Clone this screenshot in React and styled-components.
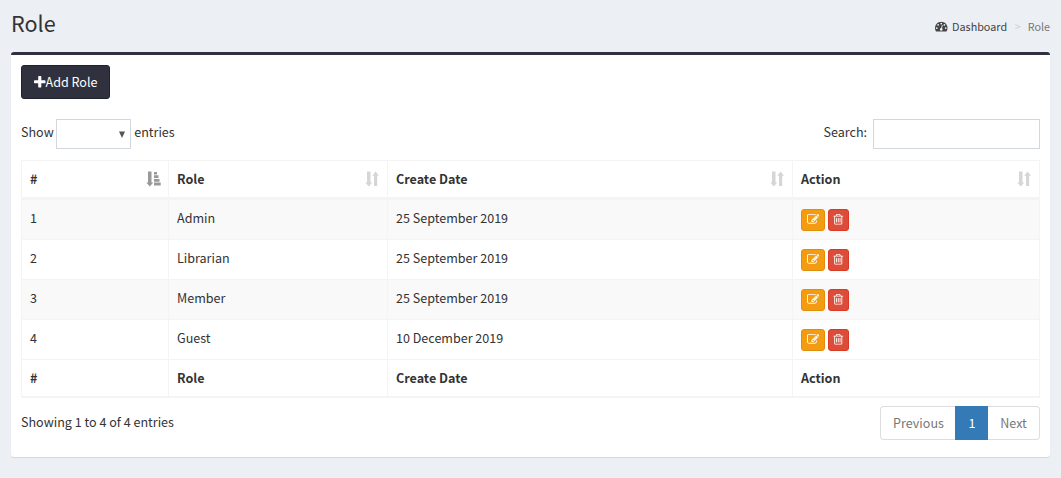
import React from "react";
import styled, { createGlobalStyle, css } from "styled-components";

const GlobalStyle = createGlobalStyle`
  * { box-sizing: border-box; }
  body {
    margin: 0;
    background: #ecf0f5;
    color: #333;
    font-family: "Source Sans Pro", "Noto Sans CJK SC", sans-serif;
    font-size: 12.56px;
    line-height: 20px;
  }
`;

const Page = styled.main`
  height: 478px;
  padding: 0 11px;
`;

const PageHeader = styled.header`
  display: flex;
  justify-content: space-between;
  height: 52px;
`;

const Title = styled.h1`
  margin: 0;
  padding-top: 10px;
  font-size: 21.6px;
  font-weight: 400;
  line-height: 26px;
`;

const Breadcrumb = styled.nav`
  display: flex;
  align-items: center;
  height: 18px;
  margin-top: 17px;
  font-size: 10.8px;
  line-height: 18px;
  color: #777;
`;

const Crumb = styled.a`
  display: flex;
  align-items: center;
  gap: 4.5px;
  color: #444;
`;

const Separator = styled.span`
  padding: 0 7px 0 7.6px;
  color: #ccc;
`;

const Card = styled.section`
  height: 405px;
  padding: 10px 10px 0;
  background: #fff;
  border-top: 3px solid #2f323e;
  border-radius: 3px;
  box-shadow: 0 1px 1px rgba(0, 0, 0, 0.1);
`;

const AddButton = styled.button`
  display: flex;
  align-items: center;
  width: 89px;
  height: 34px;
  padding: 0 0 0 12px;
  border: 1px solid #20222b;
  border-radius: 3px;
  background: #2f323e;
  color: #fff;
  font: inherit;
`;

const Controls = styled.div`
  display: flex;
  justify-content: space-between;
  height: 30px;
  margin: 20px 0 11px;
`;

const Control = styled.label`
  display: flex;
  line-height: 25px;
`;

const LengthSelect = styled.span`
  display: flex;
  align-items: center;
  justify-content: flex-end;
  width: 75px;
  height: 30px;
  margin: 0 3.5px 0 2px;
  padding-right: 5px;
  border: 1px solid #d2d6de;
  background: #fff;
`;

const SearchInput = styled.input`
  width: 167px;
  height: 30px;
  margin: 0 0 0 6px;
  border: 1px solid #d2d6de;
  background: #fff;
  outline: none;
`;

const Table = styled.table`
  width: 1019px;
  table-layout: fixed;
  border-spacing: 0;
  border-top: 1px solid #f4f4f4;
  border-left: 1px solid #f4f4f4;
`;

const Col = styled.col`
  width: ${(p) => p.$width}px;
`;

const cell = css`
  padding: 8px;
  text-align: left;
  vertical-align: top;
  border-right: 1px solid #f4f4f4;
`;

const HeadCell = styled.th`
  ${cell}
  padding-right: 7px;
  height: 39px;
  border-bottom: 3px solid #f4f4f4;
`;

const HeadContent = styled.div`
  display: flex;
  justify-content: space-between;
`;

const BodyRow = styled.tr`
  background: #fff;
  &:nth-child(odd) { background: #f9f9f9; }
`;

const Cell = styled.td`
  ${cell}
  height: 40px;
  border-bottom: 1px solid #f4f4f4;
`;

const FootCell = styled.th`
  ${cell}
  height: 38px;
  border-bottom: 2px solid #f4f4f4;
`;

const Actions = styled.div`
  display: flex;
  gap: 3px;
  padding-top: 1px;
`;

const tones = {
  edit: css`
    width: 24px;
    background: #f39c12;
    border-color: #e08e0b;
  `,
  remove: css`
    width: 21px;
    background: #dd4b39;
    border-color: #d73925;
  `,
};

const ActionButton = styled.button`
  display: flex;
  align-items: center;
  justify-content: center;
  height: 22px;
  padding: 0 0 1px;
  border: 1px solid;
  border-radius: 3px;
  color: #fff;
  ${(p) => tones[p.$tone]}
`;

const Footer = styled.div`
  display: flex;
  justify-content: space-between;
  padding-top: 8px;
`;

const Info = styled.div`
  padding-top: 6px;
`;

const Pagination = styled.div`
  display: flex;
  height: 34px;
`;

const PageButton = styled.button`
  width: ${(p) => p.$width}px;
  padding: 0 0 0 1px;
  font: inherit;
  color: #777;
  background: #fff;
  border: 1px solid #ddd;
  &:first-child { border-right: 0; border-radius: 4px 0 0 4px; }
  &:last-child { border-left: 0; padding-left: 0; border-radius: 0 4px 4px 0; }
  ${(p) => p.$active && css`
    color: #fff;
    background: #337ab7;
    border-color: #337ab7;
  `}
`;

const Svg = styled.svg`
  display: block;
  flex: none;
  fill: currentColor;
`;

const SortSvg = styled(Svg)`
  margin-top: 2px;
  color: ${(p) => (p.$active ? "#999" : "#d6d6d6")};
`;

const icons = {
  plus: {
    box: "192 128 1408 1408",
    d: "M1600 736v192q0 40-28 68t-68 28h-416v416q0 40-28 68t-68 28h-192q-40 0-68-28t-28-68v-416h-416q-40 0-68-28t-28-68v-192q0-40 28-68t68-28h416v-416q0-40 28-68t68-28h192q40 0 68 28t28 68v416h416q40 0 68 28t28 68z",
  },
  dashboard: {
    box: "0 0 1792 1792",
    d: "M384 1152q0-53-37.5-90.5t-90.5-37.5-90.5 37.5-37.5 90.5 37.5 90.5 90.5 37.5 90.5-37.5 37.5-90.5zm192-448q0-53-37.5-90.5t-90.5-37.5-90.5 37.5-37.5 90.5 37.5 90.5 90.5 37.5 90.5-37.5 37.5-90.5zm428 481l101-382q6-26-7.5-48.5t-38.5-29.5-48 6.5-30 39.5l-101 382q-60 5-107 43.5t-63 98.5q-20 77 20 146t117 89 146-20 89-117q16-60-6-117t-72-91zm660-33q0-53-37.5-90.5t-90.5-37.5-90.5 37.5-37.5 90.5 37.5 90.5 90.5 37.5 90.5-37.5 37.5-90.5zm-640-640q0-53-37.5-90.5t-90.5-37.5-90.5 37.5-37.5 90.5 37.5 90.5 90.5 37.5 90.5-37.5 37.5-90.5zm448 192q0-53-37.5-90.5t-90.5-37.5-90.5 37.5-37.5 90.5 37.5 90.5 90.5 37.5 90.5-37.5 37.5-90.5zm320 448q0 261-141 483-19 29-54 29h-1402q-35 0-54-29-141-221-141-483 0-182 71-348t191-286 286-191 348-71 348 71 286 191 191 286 71 348z",
  },
  edit: {
    box: "0 0 1792 1792",
    d: "M888 1184l116-116-152-152-116 116v56h96v96h56zm440-720q-16-16-33 1l-350 350q-17 17-1 33t33-1l350-350q17-17 1-33zm80 594v190q0 119-84.5 203.5t-203.5 84.5h-832q-119 0-203.5-84.5t-84.5-203.5v-832q0-119 84.5-203.5t203.5-84.5h832q63 0 117 25 15 7 18 23 3 17-9 29l-49 49q-14 14-32 8-23-6-45-6h-832q-66 0-113 47t-47 113v832q0 66 47 113t113 47h832q66 0 113-47t47-113v-126q0-13 9-22l64-64q15-15 35-7t20 29zm-96-738l288 288-672 672h-288v-288zm444 132l-92 92-288-288 92-92q28-28 68-28t68 28l152 152q28 28 28 68t-28 68z",
  },
  trash: {
    box: "0 0 1792 1792",
    d: "M704 736v576q0 14-9 23t-23 9h-64q-14 0-23-9t-9-23v-576q0-14 9-23t23-9h64q14 0 23 9t9 23zm256 0v576q0 14-9 23t-23 9h-64q-14 0-23-9t-9-23v-576q0-14 9-23t23-9h64q14 0 23 9t9 23zm256 0v576q0 14-9 23t-23 9h-64q-14 0-23-9t-9-23v-576q0-14 9-23t23-9h64q14 0 23 9t9 23zm128 724v-948h-896v948q0 22 7 40.5t14.5 27 10.5 8.5h832q3 0 10.5-8.5t14.5-27 7-40.5zm-672-1076h448l-48-117q-7-9-17-11h-317q-10 2-17 11zm928 32v64q0 14-9 23t-23 9h-96v948q0 83-47 143.5t-113 60.5h-832q-66 0-113-58.5t-47-141.5v-952h-96q-14 0-23-9t-9-23v-64q0-14 9-23t23-9h309l70-167q15-37 54-63t79-26h320q40 0 79 26t54 63l70 167h309q14 0 23 9t9 23z",
  },
};

const Icon = ({ name, size }) => (
  <Svg width={size} height={size} viewBox={icons[name].box}>
    <path d={icons[name].d} />
  </Svg>
);

const SortIcon = ({ active }) => (
  <SortSvg $active={active} width="15" height="16" viewBox="0 0 15 16">
    <path d="M2 .5h3.5V11.5H7.3L3.8 15.5.3 11.5H2z" />
    {active ? (
      <path d="M8 1h3v2.5H8zM8 4.3h4.5v2.7H8zM8 8h5.5v2.7H8zM8 11.6h6.7v3H8z" />
    ) : (
      <path d="M9 15h3.2V4.7H14L10.6.6 7.2 4.7H9z" />
    )}
  </SortSvg>
);

const columns = [
  { label: "#", width: 147 },
  { label: "Role", width: 219 },
  { label: "Create Date", width: 405 },
  { label: "Action", width: 247 },
];

const roles = [
  { id: 1, name: "Admin", date: "25 September 2019" },
  { id: 2, name: "Librarian", date: "25 September 2019" },
  { id: 3, name: "Member", date: "25 September 2019" },
  { id: 4, name: "Guest", date: "10 December 2019" },
];

export default function App() {
  return (
    <Page>
      <GlobalStyle />
      <PageHeader>
        <Title>Role</Title>
        <Breadcrumb>
          <Crumb>
            <Icon name="dashboard" size={12.5} />
            Dashboard
          </Crumb>
          <Separator>&gt;</Separator>
          <span>Role</span>
        </Breadcrumb>
      </PageHeader>
      <Card>
        <AddButton>
          <Icon name="plus" size={11.5} />
          Add Role
        </AddButton>
        <Controls>
          <Control>
            Show
            <LengthSelect>
              <Svg width="6" height="7" viewBox="0 0 6 7" color="#555">
                <path d="M0 .5h6L3 7z" />
              </Svg>
            </LengthSelect>
            entries
          </Control>
          <Control>
            Search:
            <SearchInput />
          </Control>
        </Controls>
        <Table>
          <colgroup>
            {columns.map((c) => <Col key={c.label} $width={c.width} />)}
          </colgroup>
          <thead>
            <tr>
              {columns.map((c, i) => (
                <HeadCell key={c.label}>
                  <HeadContent>
                    {c.label}
                    <SortIcon active={i === 0} />
                  </HeadContent>
                </HeadCell>
              ))}
            </tr>
          </thead>
          <tbody>
            {roles.map((r) => (
              <BodyRow key={r.id}>
                <Cell>{r.id}</Cell>
                <Cell>{r.name}</Cell>
                <Cell>{r.date}</Cell>
                <Cell>
                  <Actions>
                    <ActionButton $tone="edit"><Icon name="edit" size={12.5} /></ActionButton>
                    <ActionButton $tone="remove"><Icon name="trash" size={12.5} /></ActionButton>
                  </Actions>
                </Cell>
              </BodyRow>
            ))}
          </tbody>
          <tfoot>
            <tr>
              {columns.map((c) => <FootCell key={c.label}>{c.label}</FootCell>)}
            </tr>
          </tfoot>
        </Table>
        <Footer>
          <Info>Showing 1 to 4 of 4 entries</Info>
          <Pagination>
            <PageButton $width={75}>Previous</PageButton>
            <PageButton $width={33} $active>1</PageButton>
            <PageButton $width={52}>Next</PageButton>
          </Pagination>
        </Footer>
      </Card>
    </Page>
  );
}
